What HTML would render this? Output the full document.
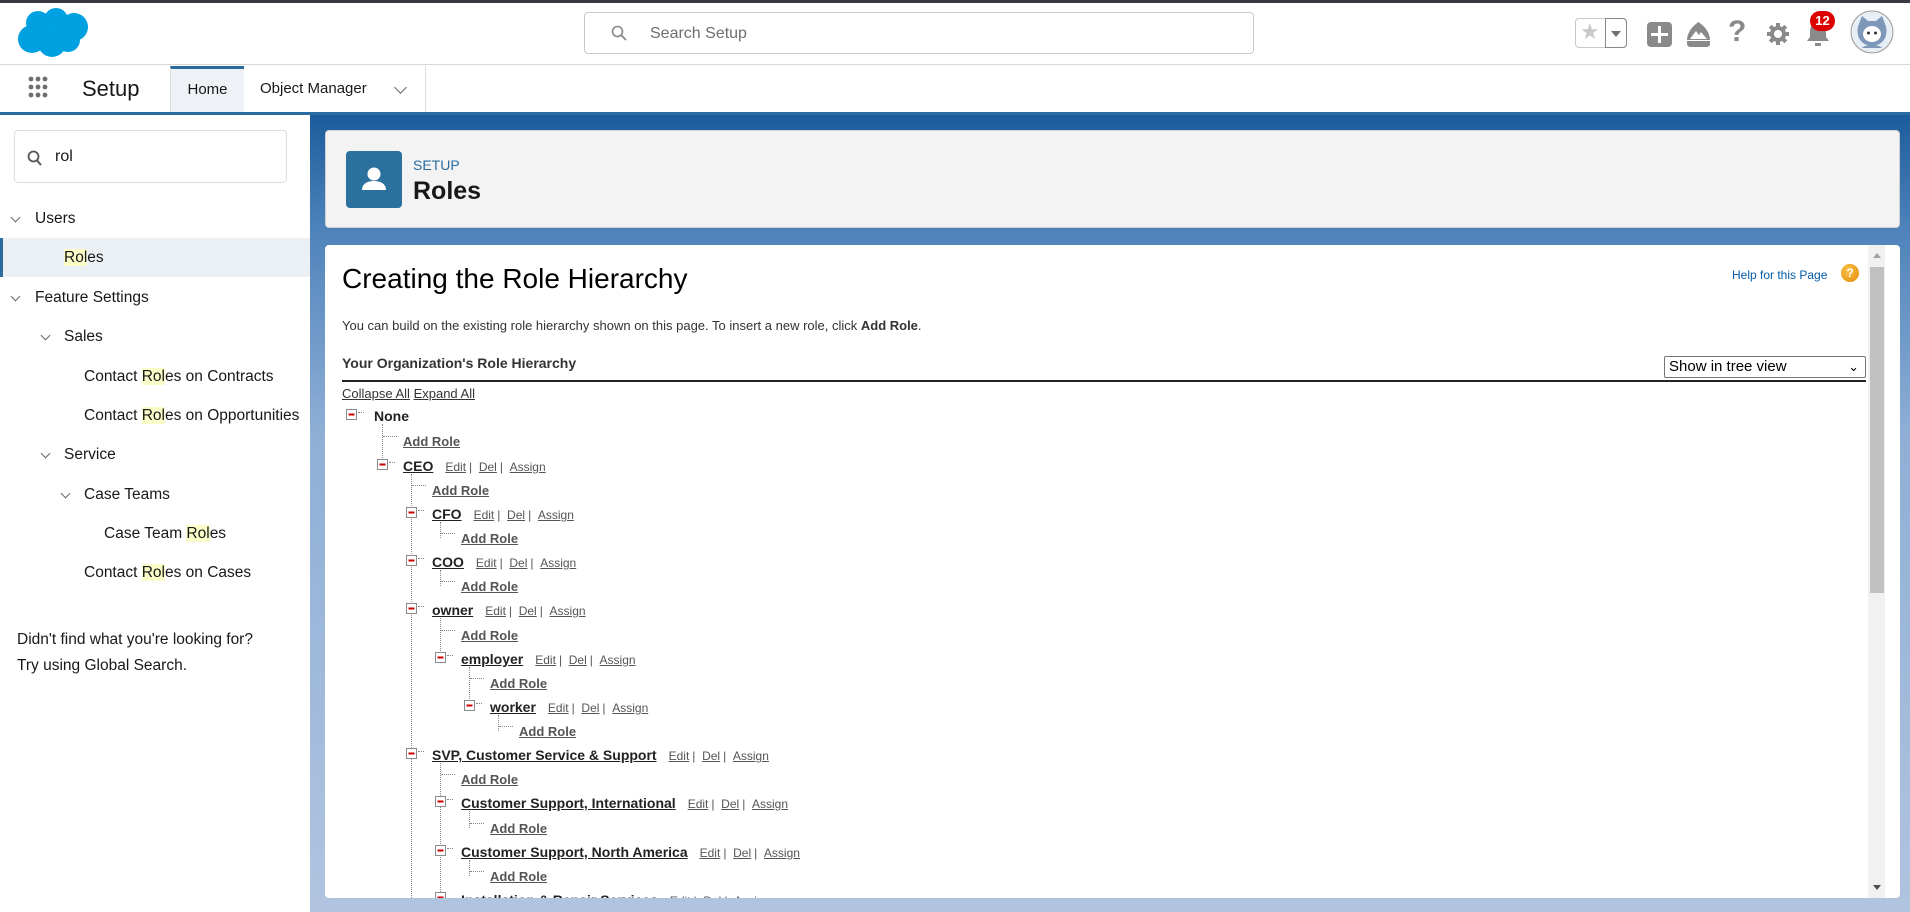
<!DOCTYPE html>
<html><head><meta charset="utf-8"><style>
*{box-sizing:border-box;margin:0;padding:0}
body{width:1910px;height:912px;overflow:hidden;font-family:"Liberation Sans",Arial,sans-serif;background:#fff;position:relative;color:#181818}
.abs{position:absolute}
.topline{left:0;top:0;width:1910px;height:3px;background:#3b3546}
.hdr{left:0;top:3px;width:1910px;height:62px;background:#fff;border-bottom:1px solid #d8d8d8}
.search{left:584px;top:12px;width:670px;height:42px;border:1px solid #c9c9c9;border-radius:4px;background:#fff}
.search span{position:absolute;left:65px;top:12px;font-size:16px;color:#706e6b}
.nav{left:0;top:65px;width:1910px;height:47px;background:#fff}
.blue{left:0;top:112px;width:1910px;height:3px;background:#2a6ca0}
.side{left:0;top:115px;width:310px;height:797px;background:#fff}
.main{left:310px;top:115px;width:1600px;height:797px;background:linear-gradient(180deg,#1c5c9c 0%,#4d82ba 14%,#8fafd6 40%,#b0c4df 100%)}
.si{position:absolute;font-size:15.5px;color:#181818;white-space:nowrap}
.hl{background:#fbfdc9}
.chev{position:absolute;width:7px;height:7px;border-right:1.3px solid #666;border-bottom:1.3px solid #666;transform:rotate(45deg)}
.card{background:#f3f3f3;border-radius:4px;border:1px solid #d0d0d0}
.row{position:absolute;height:18px;line-height:18px;white-space:nowrap;font-size:14px}
.row b{color:#222;text-decoration:underline;font-weight:bold}
.row .a{font-size:12px;color:#555;margin-left:12px}
.row .a u{margin-right:3px}
.box{position:absolute;width:11px;height:11px;border:1px solid #8a8a8a;background:#fff}
.box:after{content:"";position:absolute;left:2px;top:4px;width:5px;height:1px;background:#c00;box-shadow:0 0 0 .5px #c00}
.stub{position:absolute;height:0;border-top:1px dotted #888}
.vl{position:absolute;width:0;border-left:1px dotted #888}
</style></head><body>
<div class="abs topline"></div>
<div class="abs hdr"></div>
<svg class="abs" style="left:16px;top:7px" width="74" height="52" viewBox="0 0 74 52"><g fill="#00a1e0"><circle cx="22" cy="16" r="12"/><circle cx="40" cy="13" r="12"/><circle cx="58" cy="20" r="14"/><circle cx="16" cy="32" r="14"/><circle cx="36" cy="36" r="14"/><circle cx="52" cy="33" r="12"/></g></svg>
<div class="abs search"><svg class="abs" style="left:26px;top:12px" width="16" height="16" viewBox="0 0 16 16"><circle cx="6.5" cy="6.5" r="5" fill="none" stroke="#888" stroke-width="1.6"/><path d="M10.5 10.5L15 15" stroke="#888" stroke-width="1.8"/></svg><span>Search Setup</span></div>
<div class="abs" style="left:1575px;top:18px;width:52px;height:30px;border:1px solid #c9c9c9;border-radius:4px;background:#fff"></div>
<div class="abs" style="left:1605px;top:18px;width:22px;height:30px;border:1px solid #888;border-radius:0 4px 4px 0"></div>
<div class="abs" style="left:1580px;top:19px;font-size:22px;color:#c9c9c9">★</div>
<div class="abs" style="left:1611px;top:31px;width:0;height:0;border-left:5px solid transparent;border-right:5px solid transparent;border-top:6px solid #706e6b"></div>
<div class="abs" style="left:1647px;top:22px;width:25px;height:25px;background:#8a8a8a;border-radius:4px"></div>
<div class="abs" style="left:1658px;top:26px;width:3px;height:17px;background:#fff"></div>
<div class="abs" style="left:1651px;top:33px;width:17px;height:3px;background:#fff"></div>
<svg class="abs" style="left:1686px;top:21px" width="25" height="26" viewBox="0 0 25 26"><path d="M12.5 1C5 6 1 13 1 19h23C24 13 20 6 12.5 1z" fill="#8a8a8a"/><path d="M4 18l6-8 3 4 2-3 6 7z" fill="#fff"/><path d="M1 20h23v3c0 2-2 3-4 3H5c-2 0-4-1-4-3z" fill="#8a8a8a"/></svg>
<div class="abs" style="left:1728px;top:15px;font-size:30px;color:#8a8a8a;font-weight:bold">?</div>
<svg class="abs" style="left:1766px;top:22px" width="24" height="24" viewBox="0 0 24 24"><g fill="#8a8a8a"><circle cx="12" cy="12" r="8"/><rect x="10" y="1" width="4" height="22"/><rect x="1" y="10" width="22" height="4"/><rect x="10" y="1" width="4" height="22" transform="rotate(45 12 12)"/><rect x="10" y="1" width="4" height="22" transform="rotate(-45 12 12)"/></g><circle cx="12" cy="12" r="4" fill="#fff"/></svg>
<svg class="abs" style="left:1806px;top:20px" width="24" height="28" viewBox="0 0 24 28"><path d="M12 2c-5 0-8 4-8 9v6l-3 4h22l-3-4v-6c0-5-3-9-8-9z" fill="#8a8a8a"/><rect x="9" y="23" width="6" height="3" fill="#8a8a8a"/></svg>
<div class="abs" style="left:1810px;top:11px;width:25px;height:20px;border-radius:10px;background:#d00;color:#fff;font-size:13px;font-weight:bold;text-align:center;line-height:20px">12</div>
<svg class="abs" style="left:1850px;top:10px" width="44" height="44" viewBox="0 0 44 44"><circle cx="22" cy="22" r="21" fill="#e8eef6" stroke="#999"/><path d="M9 14l3-8 6 5h8l6-5 3 8c2 4 2 10 0 14-3 6-9 8-13 8s-10-2-13-8c-2-4-2-10 0-14z" fill="#7d97b8"/><ellipse cx="22" cy="24" rx="9" ry="8" fill="#fff"/><circle cx="18.5" cy="23" r="1.5" fill="#333"/><circle cx="25.5" cy="23" r="1.5" fill="#333"/><path d="M12 38c3-4 17-4 20 0" fill="#7d97b8"/></svg>

<div class="abs nav"></div>
<svg class="abs" style="left:28px;top:75px" width="20" height="26" viewBox="0 0 20 26"><g fill="#706e6b"><circle cx="3" cy="4" r="2.4"/><circle cx="10" cy="4" r="2.4"/><circle cx="17" cy="4" r="2.4"/><circle cx="3" cy="12" r="2.4"/><circle cx="10" cy="12" r="2.4"/><circle cx="17" cy="12" r="2.4"/><circle cx="3" cy="20" r="2.4"/><circle cx="10" cy="20" r="2.4"/><circle cx="17" cy="20" r="2.4"/></g></svg>
<div class="abs" style="left:82px;top:76px;font-size:22px;color:#181818">Setup</div>
<div class="abs" style="left:170px;top:66px;width:74px;height:46px;background:#eef1f6;border-top:3px solid #2a6ca0;border-left:1px solid #ddd;font-size:15px;text-align:center;line-height:41px">Home</div>
<div class="abs" style="left:244px;top:66px;width:182px;height:46px;border-right:1px solid #ddd;font-size:15px;line-height:46px;padding-left:16px">Object Manager</div>
<div class="chev" style="left:396px;top:83px;width:9px;height:9px"></div>
<div class="abs blue"></div>

<div class="abs side">
<div class="abs" style="left:14px;top:15px;width:273px;height:53px;border:1px solid #ddd;border-radius:4px"></div>
<svg class="abs" style="left:27px;top:35px" width="16" height="17" viewBox="0 0 16 17"><circle cx="6.5" cy="6.5" r="5" fill="none" stroke="#555" stroke-width="1.8"/><path d="M10 10.5L14 15" stroke="#555" stroke-width="2"/></svg>
<div class="si" style="left:55px;top:33px;font-size:16px">rol</div>
<div class="abs" style="left:0;top:123px;width:310px;height:39px;background:#eaf0f4;border-left:3px solid #2a6ca0"></div>
</div>
<div class="chev" style="left:12px;top:214px"></div><div class="si" style="left:35px;top:210px">Users</div>
<div class="si" style="left:64px;top:249px"><span class="hl">Rol</span>es</div>
<div class="chev" style="left:12px;top:293px"></div><div class="si" style="left:35px;top:289px">Feature Settings</div>
<div class="chev" style="left:42px;top:332px"></div><div class="si" style="left:64px;top:328px">Sales</div>
<div class="si" style="left:84px;top:368px">Contact <span class="hl">Rol</span>es on Contracts</div>
<div class="si" style="left:84px;top:407px">Contact <span class="hl">Rol</span>es on Opportunities</div>
<div class="chev" style="left:42px;top:450px"></div><div class="si" style="left:64px;top:446px">Service</div>
<div class="chev" style="left:62px;top:490px"></div><div class="si" style="left:84px;top:486px">Case Teams</div>
<div class="si" style="left:104px;top:525px">Case Team <span class="hl">Rol</span>es</div>
<div class="si" style="left:84px;top:564px">Contact <span class="hl">Rol</span>es on Cases</div>
<div class="si" style="left:17px;top:631px">Didn't find what you're looking for?</div>
<div class="si" style="left:17px;top:657px">Try using Global Search.</div>

<div class="abs main"></div>
<div class="abs card" style="left:325px;top:130px;width:1575px;height:98px"></div>
<div class="abs" style="left:346px;top:151px;width:56px;height:57px;background:#2a719e;border-radius:4px"></div>
<svg class="abs" style="left:360px;top:166px" width="28" height="26" viewBox="0 0 28 26"><circle cx="14" cy="8" r="6.5" fill="#fff"/><path d="M2 24c0-6 5-9 12-9s12 3 12 9z" fill="#fff"/></svg>
<div class="abs" style="left:413px;top:157px;font-size:14px;color:#2a6ca0">SETUP</div>
<div class="abs" style="left:413px;top:177px;font-size:25px;font-weight:bold;color:#181818">Roles</div>

<div class="abs" style="left:325px;top:245px;width:1575px;height:653px;background:#fff;border-radius:4px;overflow:hidden">
<div class="abs" style="left:1543px;top:0;width:17px;height:653px;background:#f1f1f1"></div>
<div class="abs" style="left:1545px;top:22px;width:14px;height:326px;background:#c1c1c1"></div>
<div class="abs" style="left:1548px;top:8px;border-left:4px solid transparent;border-right:4px solid transparent;border-bottom:5px solid #a3a3a3"></div>
<div class="abs" style="left:1548px;top:640px;border-left:4px solid transparent;border-right:4px solid transparent;border-top:5px solid #505050"></div>
</div>
<div class="abs" style="left:342px;top:263px;font-size:28px;color:#000">Creating the Role Hierarchy</div>
<div class="abs" style="left:1732px;top:268px;font-size:12px;color:#015ba7">Help for this Page</div>
<div class="abs" style="left:1841px;top:264px;width:18px;height:18px;border-radius:50%;background:radial-gradient(circle at 40% 35%,#fcc24c,#e08a00);color:#fff;font-size:12px;font-weight:bold;text-align:center;line-height:18px">?</div>
<div class="abs" style="left:342px;top:318px;font-size:13px;color:#333">You can build on the existing role hierarchy shown on this page. To insert a new role, click <b>Add Role</b>.</div>
<div class="abs" style="left:342px;top:355px;font-size:14px;font-weight:bold;color:#333">Your Organization's Role Hierarchy</div>
<div class="abs" style="left:342px;top:380px;width:1524px;height:2px;background:#222"></div>
<div class="abs" style="left:1664px;top:356px;width:202px;height:22px;border:1px solid #767676;border-radius:2px;font-size:15px;line-height:20px;padding-left:4px;color:#000;background:#fff">Show in tree view<span style="position:absolute;right:6px;top:0;font-size:13px">&#8964;</span></div>
<div class="abs" style="left:342px;top:386px;font-size:13px;color:#333"><u>Collapse All</u> <u>Expand All</u></div>

<div class="vl" style="left:382px;top:424px;height:42px"></div>
<div class="vl" style="left:411px;top:474px;height:424px"></div>
<div class="vl" style="left:440px;top:522px;height:16px"></div>
<div class="vl" style="left:440px;top:570px;height:16px"></div>
<div class="vl" style="left:440px;top:618px;height:41px"></div>
<div class="vl" style="left:469px;top:667px;height:40px"></div>
<div class="vl" style="left:498px;top:715px;height:16px"></div>
<div class="vl" style="left:440px;top:763px;height:135px"></div>
<div class="vl" style="left:469px;top:811px;height:17px"></div>
<div class="vl" style="left:469px;top:860px;height:16px"></div>

<div class="box" style="left:346px;top:409px"></div><div class="stub" style="left:358px;top:412px;width:6px"></div>
<div class="row" style="left:374px;top:407px"><b style="text-decoration:none">None</b></div>

<div class="stub" style="left:383px;top:436px;width:14px"></div><div class="row" style="left:403px;top:432px"><b style="font-size:13px;color:#555">Add Role</b></div>
<div class="box" style="left:377px;top:459px"></div><div class="stub" style="left:389px;top:462px;width:6px"></div>
<div class="row" style="left:403px;top:457px"><b>CEO</b><span class="a"><u>Edit</u>| &nbsp;<u>Del</u>| &nbsp;<u>Assign</u></span></div>

<div class="stub" style="left:412px;top:485px;width:14px"></div><div class="row" style="left:432px;top:481px"><b style="font-size:13px;color:#555">Add Role</b></div>
<div class="box" style="left:406px;top:507px"></div><div class="stub" style="left:418px;top:510px;width:6px"></div>
<div class="row" style="left:432px;top:505px"><b>CFO</b><span class="a"><u>Edit</u>| &nbsp;<u>Del</u>| &nbsp;<u>Assign</u></span></div>
<div class="stub" style="left:441px;top:533px;width:14px"></div><div class="row" style="left:461px;top:529px"><b style="font-size:13px;color:#555">Add Role</b></div>
<div class="box" style="left:406px;top:555px"></div><div class="stub" style="left:418px;top:558px;width:6px"></div>
<div class="row" style="left:432px;top:553px"><b>COO</b><span class="a"><u>Edit</u>| &nbsp;<u>Del</u>| &nbsp;<u>Assign</u></span></div>
<div class="stub" style="left:441px;top:581px;width:14px"></div><div class="row" style="left:461px;top:577px"><b style="font-size:13px;color:#555">Add Role</b></div>
<div class="box" style="left:406px;top:603px"></div><div class="stub" style="left:418px;top:606px;width:6px"></div>
<div class="row" style="left:432px;top:601px"><b>owner</b><span class="a"><u>Edit</u>| &nbsp;<u>Del</u>| &nbsp;<u>Assign</u></span></div>
<div class="stub" style="left:441px;top:630px;width:14px"></div><div class="row" style="left:461px;top:626px"><b style="font-size:13px;color:#555">Add Role</b></div>
<div class="box" style="left:435px;top:652px"></div><div class="stub" style="left:447px;top:655px;width:6px"></div>
<div class="row" style="left:461px;top:650px"><b>employer</b><span class="a"><u>Edit</u>| &nbsp;<u>Del</u>| &nbsp;<u>Assign</u></span></div>
<div class="stub" style="left:470px;top:678px;width:14px"></div><div class="row" style="left:490px;top:674px"><b style="font-size:13px;color:#555">Add Role</b></div>
<div class="box" style="left:464px;top:700px"></div><div class="stub" style="left:476px;top:703px;width:6px"></div>
<div class="row" style="left:490px;top:698px"><b>worker</b><span class="a"><u>Edit</u>| &nbsp;<u>Del</u>| &nbsp;<u>Assign</u></span></div>
<div class="stub" style="left:499px;top:726px;width:14px"></div><div class="row" style="left:519px;top:722px"><b style="font-size:13px;color:#555">Add Role</b></div>

<div class="box" style="left:406px;top:748px"></div><div class="stub" style="left:418px;top:751px;width:6px"></div>
<div class="row" style="left:432px;top:746px"><b>SVP, Customer Service &amp; Support</b><span class="a"><u>Edit</u>| &nbsp;<u>Del</u>| &nbsp;<u>Assign</u></span></div>
<div class="stub" style="left:441px;top:774px;width:14px"></div><div class="row" style="left:461px;top:770px"><b style="font-size:13px;color:#555">Add Role</b></div>
<div class="box" style="left:435px;top:796px"></div><div class="stub" style="left:447px;top:799px;width:6px"></div>
<div class="row" style="left:461px;top:794px"><b>Customer Support, International</b><span class="a"><u>Edit</u>| &nbsp;<u>Del</u>| &nbsp;<u>Assign</u></span></div>
<div class="stub" style="left:470px;top:823px;width:14px"></div><div class="row" style="left:490px;top:819px"><b style="font-size:13px;color:#555">Add Role</b></div>
<div class="box" style="left:435px;top:845px"></div><div class="stub" style="left:447px;top:848px;width:6px"></div>
<div class="row" style="left:461px;top:843px"><b>Customer Support, North America</b><span class="a"><u>Edit</u>| &nbsp;<u>Del</u>| &nbsp;<u>Assign</u></span></div>
<div class="stub" style="left:470px;top:871px;width:14px"></div><div class="row" style="left:490px;top:867px"><b style="font-size:13px;color:#555">Add Role</b></div>
<div class="abs" style="left:330px;top:891px;width:1530px;height:7px;overflow:hidden">
<div class="box" style="left:105px;top:1px"></div>
<div class="row" style="left:131px;top:0px"><b>Installation &amp; Repair Services</b><span class="a"><u>Edit</u>| &nbsp;<u>Del</u>| &nbsp;<u>Assign</u></span></div>
</div>
<div class="abs" style="left:310px;top:898px;width:1600px;height:14px;background:#b0c4df"></div>
</body></html>
